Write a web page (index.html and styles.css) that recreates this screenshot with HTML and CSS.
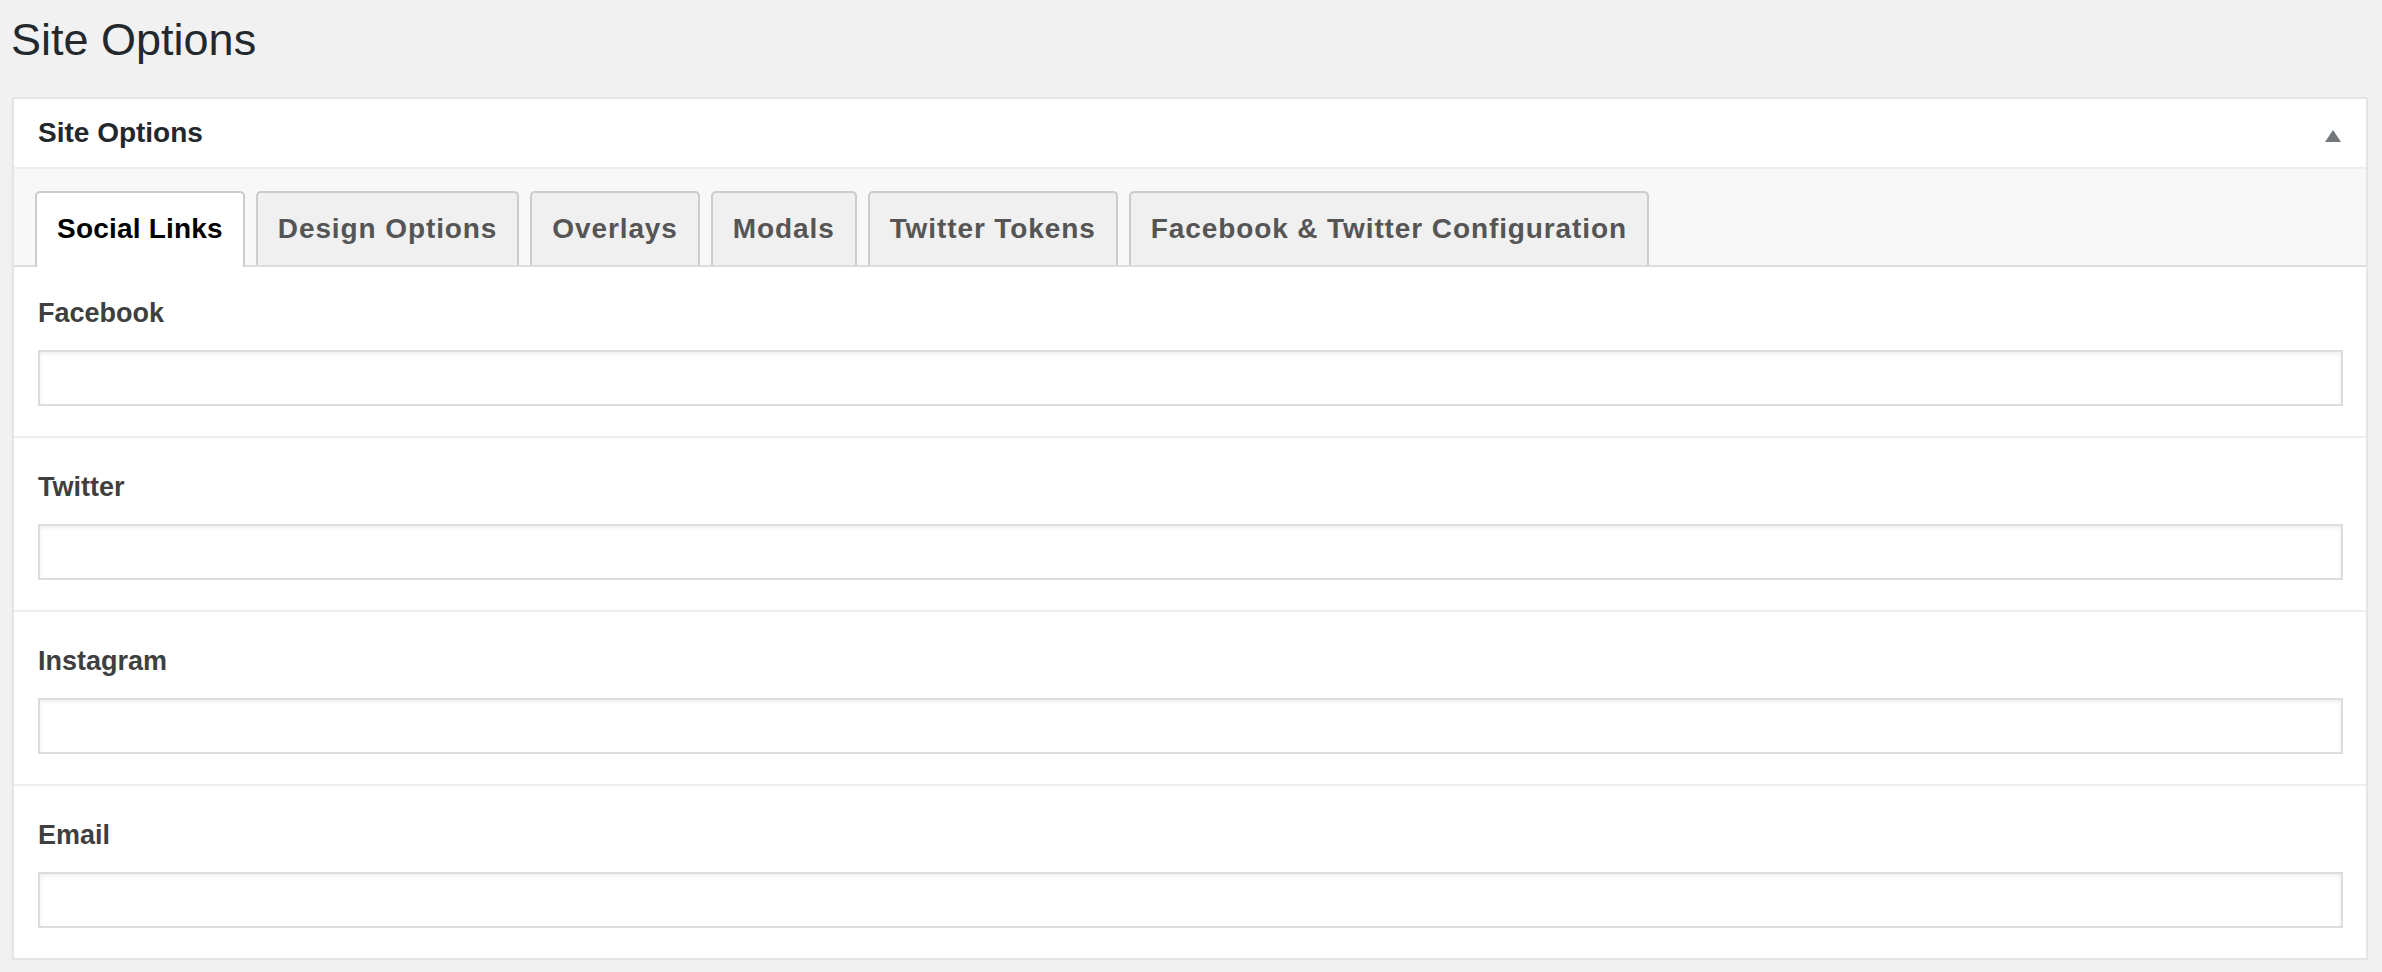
FILE: index.html
```html
<!DOCTYPE html>
<html lang="en">
<head>
<meta charset="utf-8">
<title>Site Options</title>
<link rel="stylesheet" href="styles.css">
</head>
<body>
<div class="wrap">
  <h1 class="page-title">Site Options</h1>
  <div class="postbox">
    <div class="postbox-header">
      <h2 class="postbox-title">Site Options</h2>
      <button class="toggle" type="button" aria-label="Toggle panel">
        <svg width="16" height="12" viewBox="0 0 16 12"><path d="M8 0 L16 12 L0 12 Z" fill="#72777c"/></svg>
      </button>
    </div>
    <div class="tabs-nav">
      <a class="tab active">Social Links</a>
      <a class="tab">Design Options</a>
      <a class="tab">Overlays</a>
      <a class="tab">Modals</a>
      <a class="tab">Twitter Tokens</a>
      <a class="tab">Facebook &amp; Twitter Configuration</a>
    </div>
    <div class="fields">
      <div class="field first">
        <label class="field-label">Facebook</label>
        <input class="field-input" type="text">
      </div>
      <div class="field">
        <label class="field-label">Twitter</label>
        <input class="field-input" type="text">
      </div>
      <div class="field">
        <label class="field-label">Instagram</label>
        <input class="field-input" type="text">
      </div>
      <div class="field">
        <label class="field-label">Email</label>
        <input class="field-input" type="text">
      </div>
    </div>
  </div>
</div>
</body>
</html>
```

FILE: styles.css
```css
* { box-sizing: border-box; }
html, body {
  margin: 0;
  padding: 0;
  background: #f1f1f1;
  font-family: "Liberation Sans", Arial, sans-serif;
}
.wrap {
  padding: 10px 14px 0 12px;
}
.page-title {
  margin: 0 0 27px -1px;
  font-size: 45px;
  line-height: 60px;
  font-weight: 400;
  color: #23282d;
}
.postbox {
  background: #fff;
  border: 2px solid #e5e5e5;
  box-shadow: 0 2px 2px rgba(0,0,0,0.04);
}
.postbox-header {
  height: 70px;
  display: flex;
  align-items: center;
  justify-content: space-between;
  padding: 0 25px 0 24px;
  border-bottom: 2px solid #eee;
}
.postbox-title {
  margin: 0;
  font-size: 28px;
  font-weight: 700;
  color: #23282d;
  line-height: 1;
}
.toggle {
  border: 0;
  background: none;
  padding: 0;
  margin-top: 6px;
  display: flex;
}
.tabs-nav {
  background: #f8f8f8;
  padding: 22px 21px 0 21px;
  display: flex;
  gap: 11px;
  border-bottom: 2px solid #ddd;
  height: 98px;
}
.tab {
  height: 74px;
  padding: 0 20px;
  border: 2px solid #ccc;
  border-bottom: 0;
  border-radius: 5px 5px 0 0;
  background: #f0f0f0;
  color: #555;
  font-size: 28px;
  font-weight: 700;
  letter-spacing: 0.9px;
  line-height: 72px;
  white-space: nowrap;
}
.tab.active {
  background: #fff;
  color: #000;
  height: 76px;
  letter-spacing: 0.2px;
  position: relative;
  z-index: 1;
}
.field {
  border-top: 2px solid #eee;
  padding: 30px 23px 30px 24px;
}
.field.first {
  border-top: 0;
  padding-top: 27px;
}
.field-label {
  display: block;
  font-size: 27px;
  line-height: 38px;
  font-weight: 700;
  color: #3f3f3f;
  margin-bottom: 18px;
}
.field-input {
  display: block;
  width: 100%;
  height: 56px;
  border: 2px solid #ddd;
  box-shadow: inset 0 2px 4px rgba(0,0,0,0.07);
  background: #fff;
  margin: 0;
  padding: 0 10px;
  font-size: 28px;
}
```
